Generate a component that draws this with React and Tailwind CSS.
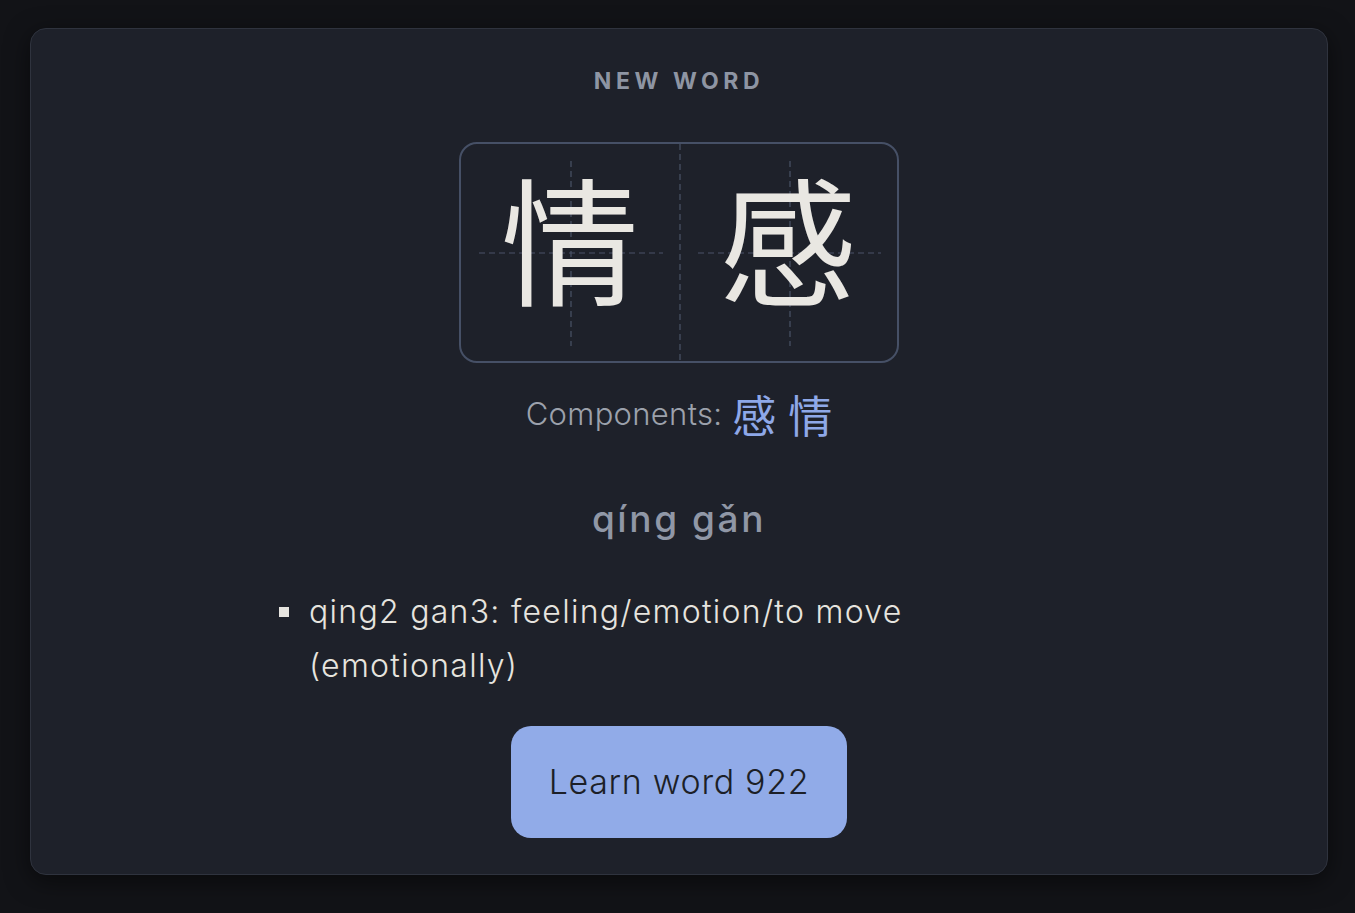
import React from "react";

const SANS = "font-['Inter','Noto_Sans_CJK_SC',sans-serif]";
const CJK = "font-['Noto_Sans_CJK_SC','Noto_Sans',sans-serif]";

const GridLines = () => (
  <svg className="absolute inset-0 h-full w-full" viewBox="0 0 436 217" preserveAspectRatio="none">
    <g stroke="#4a5368" strokeWidth="1.2" strokeDasharray="6 4" fill="none">
      <line x1="219" y1="0" x2="219" y2="217" />
      <line x1="110" y1="17" x2="110" y2="202" />
      <line x1="18" y1="109" x2="202" y2="109" />
      <line x1="329" y1="17" x2="329" y2="202" />
      <line x1="237" y1="109" x2="420" y2="109" />
    </g>
  </svg>
);

export default function App() {
  const word = ["情", "感"];
  const components = ["感", "情"];
  const definitions = ["qing2 gan3: feeling/emotion/to move (emotionally)"];

  return (
    <div className={`min-h-[913px] bg-[#121317] pl-[30px] pr-[27px] pt-[28px] pb-[38px] ${SANS}`}>
      <div className="flex h-[847px] flex-col items-center rounded-2xl border border-[#2f333e] bg-[#1e212a] shadow-[0_6px_24px_rgba(0,0,0,0.5)]">
        <div className="mt-[38px] text-[23px] font-bold leading-[28px] tracking-[0.2em] text-[#8e95a3]">
          NEW WORD
        </div>

        <div className="relative mt-[47px] flex h-[221px] w-[440px] rounded-[18px] border-2 border-[#465066]">
          <GridLines />
          {word.map((c) => (
            <div
              key={c}
              className={`relative flex flex-1 items-center justify-center pb-[36px] text-[138px] leading-none text-[#e9e7e2] ${CJK}`}
            >
              {c}
            </div>
          ))}
        </div>

        <div className="mt-[28px] flex items-center gap-[10px]">
          <span className="text-[31px] font-light tracking-[0.01em] text-[#9ca1ac]">Components:</span>
          <span className={`flex gap-[12px] text-[44px] leading-none text-[#8ea8e8] ${CJK}`}>
            {components.map((c) => (
              <span key={c}>{c}</span>
            ))}
          </span>
        </div>

        <div className="mt-[59px] text-[37px] font-medium leading-[44px] tracking-[0.07em] text-[#9097a6]">
          qíng gǎn
        </div>

        <ul className="mt-[44px] w-[818px] pl-[9px] pr-[140px] text-[32px] font-light leading-[54px] tracking-[0.04em] text-[#e6e4df]">
          {definitions.map((d) => (
            <li key={d} className="flex">
              <span className="mr-[20px] mt-[22px] h-[10px] w-[10px] shrink-0 bg-[#e6e4df]" />
              <span>{d}</span>
            </li>
          ))}
        </ul>

        <button className="mt-[33px] flex h-[112px] w-[336px] items-center justify-center rounded-[20px] bg-[#91abe8] text-[34px] font-light tracking-[0.02em] text-[#1c1f27]">
          Learn word 922
        </button>
      </div>
    </div>
  );
}
